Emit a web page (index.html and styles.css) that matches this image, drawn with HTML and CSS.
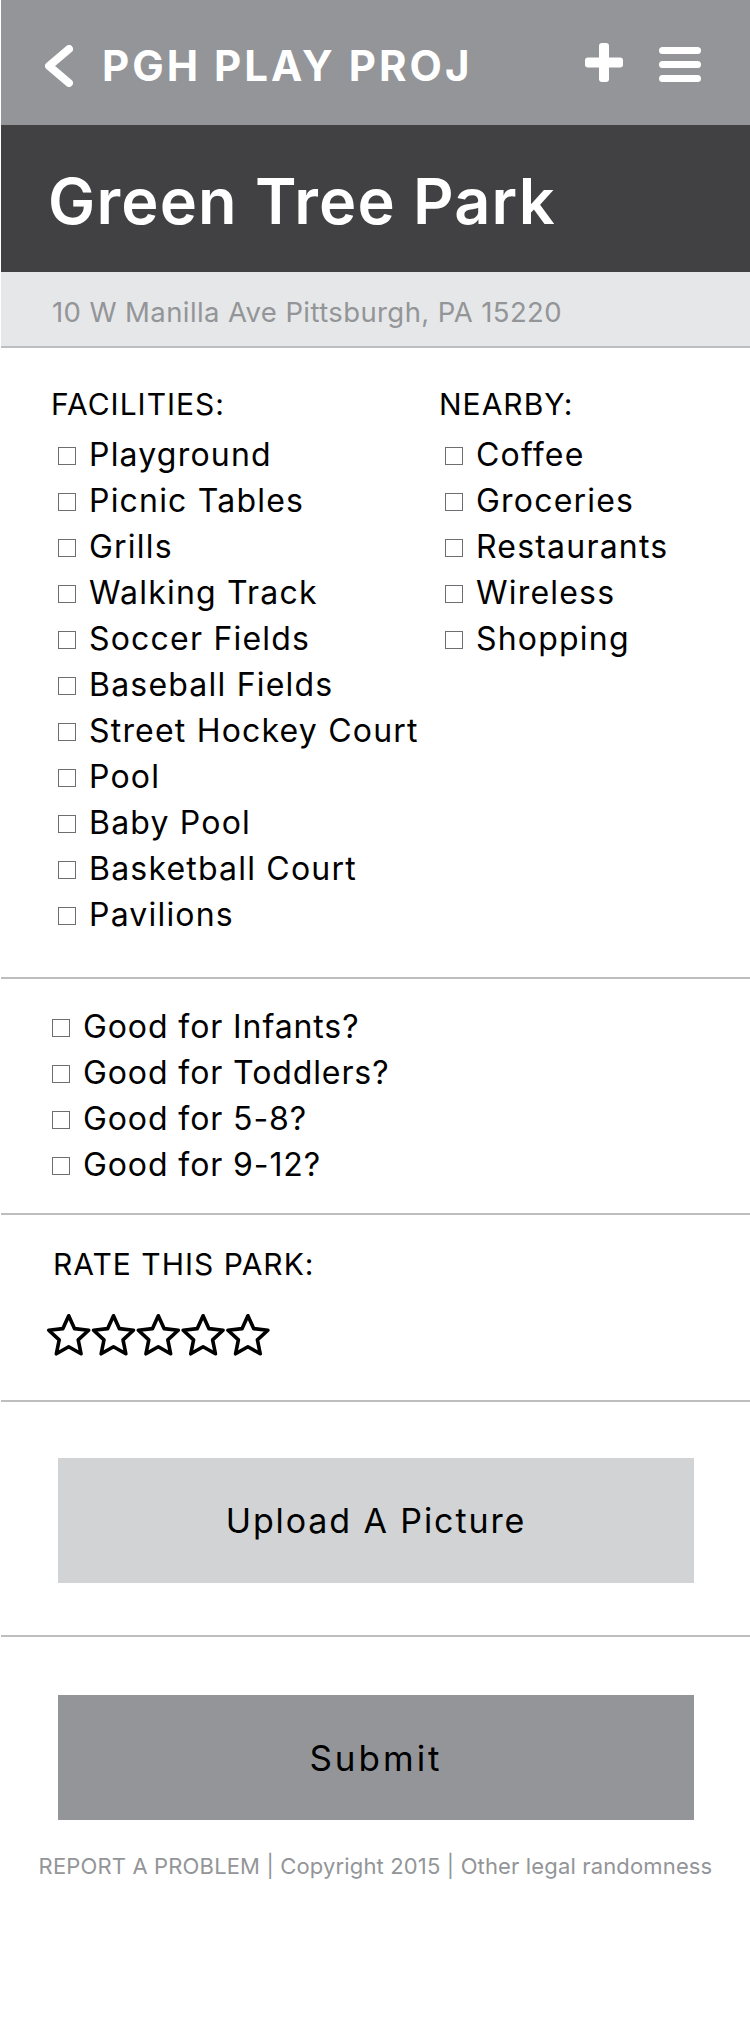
FILE: index.html
```html
<!DOCTYPE html>
<html lang="en">
<head>
<meta charset="utf-8">
<title>Green Tree Park</title>
<link rel="stylesheet" href="styles.css">
</head>
<body>
<div class="page">
  <header class="topbar">
    <svg class="icon-back" width="28" height="42" viewBox="0 0 28 42" aria-hidden="true">
      <polyline points="24,4 4,21 24,38" fill="none" stroke="#fff" stroke-width="8" stroke-linecap="round" stroke-linejoin="round"/>
    </svg>
    <span class="brand">PGH PLAY PROJ</span>
    <svg class="icon-plus" width="38" height="39" viewBox="0 0 38 39" aria-hidden="true">
      <rect x="0" y="14.5" width="38" height="10" rx="3" fill="#fff"/>
      <rect x="14" y="0" width="10" height="39" rx="3" fill="#fff"/>
    </svg>
    <svg class="icon-menu" width="42" height="35" viewBox="0 0 42 35" aria-hidden="true">
      <rect x="0" y="0" width="42" height="7" rx="3.5" fill="#fff"/>
      <rect x="0" y="14" width="42" height="7" rx="3.5" fill="#fff"/>
      <rect x="0" y="28" width="42" height="7" rx="3.5" fill="#fff"/>
    </svg>
  </header>

  <div class="park-name"><h1>Green Tree Park</h1></div>
  <div class="address">10 W Manilla Ave Pittsburgh, PA 15220</div>

  <section class="amenities">
    <div class="col col-facilities">
      <h2 class="label">FACILITIES:</h2>
      <ul class="checklist">
        <li><span class="cb"></span>Playground</li>
        <li><span class="cb"></span>Picnic Tables</li>
        <li><span class="cb"></span>Grills</li>
        <li><span class="cb"></span>Walking Track</li>
        <li><span class="cb"></span>Soccer Fields</li>
        <li><span class="cb"></span>Baseball Fields</li>
        <li><span class="cb"></span>Street Hockey Court</li>
        <li><span class="cb"></span>Pool</li>
        <li><span class="cb"></span>Baby Pool</li>
        <li><span class="cb"></span>Basketball Court</li>
        <li><span class="cb"></span>Pavilions</li>
      </ul>
    </div>
    <div class="col col-nearby">
      <h2 class="label">NEARBY:</h2>
      <ul class="checklist">
        <li><span class="cb"></span>Coffee</li>
        <li><span class="cb"></span>Groceries</li>
        <li><span class="cb"></span>Restaurants</li>
        <li><span class="cb"></span>Wireless</li>
        <li><span class="cb"></span>Shopping</li>
      </ul>
    </div>
  </section>

  <section class="ages">
    <ul class="checklist">
      <li><span class="cb"></span>Good for Infants?</li>
      <li><span class="cb"></span>Good for Toddlers?</li>
      <li><span class="cb"></span>Good for 5-8?</li>
      <li><span class="cb"></span>Good for 9-12?</li>
    </ul>
  </section>

  <section class="rating">
    <h2 class="label">RATE THIS PARK:</h2>
    <svg class="stars" width="226" height="46" viewBox="0 0 226 46" aria-label="0 of 5 stars">
      <defs>
        <polygon id="star" points="0,-21 5.88,-8.09 19.97,-6.49 9.51,3.09 12.34,16.99 0,10 -12.34,16.99 -9.51,3.09 -19.97,-6.49 -5.88,-8.09" fill="none" stroke="#000" stroke-width="3.6" stroke-linejoin="round"/>
      </defs>
      <use href="#star" x="22.7" y="24.75"/>
      <use href="#star" x="67.5" y="24.75"/>
      <use href="#star" x="112.3" y="24.75"/>
      <use href="#star" x="157.1" y="24.75"/>
      <use href="#star" x="201.9" y="24.75"/>
    </svg>
  </section>

  <section class="upload">
    <button class="btn btn-light" type="button">Upload A Picture</button>
  </section>

  <section class="submit">
    <button class="btn btn-dark" type="submit">Submit</button>
    <p class="footer">REPORT A PROBLEM | Copyright 2015 | Other legal randomness</p>
  </section>
</div>
</body>
</html>
```

FILE: styles.css
```css
html, body {
  margin: 0;
  padding: 0;
  background: #fff;
}

body {
  font-family: Inter, "Liberation Sans", sans-serif;
  color: #000;
}

.page {
  width: 749px;
  margin-left: 1px;
}

h1, h2, p, ul {
  margin: 0;
  padding: 0;
  font-weight: 400;
}

ul {
  list-style: none;
}

/* top bar */
.topbar {
  height: 125px;
  background: #939598;
  display: flex;
  align-items: center;
  padding: 0 49px 0 44px;
  box-sizing: border-box;
}

.icon-back {
  flex: none;
  margin-top: 7px;
}

.brand {
  color: #fff;
  font-weight: 700;
  font-size: 42px;
  letter-spacing: 3px;
  margin-left: 29px;
  margin-top: 6px;
}

.icon-plus {
  flex: none;
  margin-left: auto;
}

.icon-menu {
  flex: none;
  margin-left: 36px;
  margin-top: 4px;
}

/* park name band */
.park-name {
  background: #414042;
  height: 147px;
  box-sizing: border-box;
  padding: 45px 0 0 47px;
}

.park-name h1 {
  color: #fff;
  font-size: 63px;
  line-height: 63px;
  font-weight: 600;
  letter-spacing: 1.2px;
}

.address {
  background: #e6e7e8;
  color: #939598;
  font-size: 27.5px;
  line-height: 34px;
  letter-spacing: 0.4px;
  height: 76px;
  box-sizing: border-box;
  padding: 23px 0 0 51px;
  border-bottom: 2px solid #bcbec0;
}

/* shared */
.label {
  font-size: 30px;
  line-height: 36px;
  letter-spacing: 1px;
  margin-bottom: 9.5px;
}

.checklist li {
  display: flex;
  align-items: center;
  font-size: 32px;
  line-height: 46px;
  letter-spacing: 1.2px;
  white-space: nowrap;
}

.cb {
  flex: none;
  width: 18px;
  height: 18px;
  box-sizing: border-box;
  border: 1.5px solid #6d6e71;
  margin-right: 13px;
  margin-top: 2px;
}

section {
  border-bottom: 2px solid #bcbec0;
}

/* facilities / nearby */
.amenities {
  display: grid;
  grid-template-columns: 388px 1fr;
  padding: 38px 0 0 50px;
  height: 631px;
  box-sizing: border-box;
}

.amenities .checklist {
  padding-left: 7px;
}

.col-nearby .checklist {
  padding-left: 6px;
}

/* ages */
.ages {
  padding: 24.5px 0 0 51px;
  height: 236px;
  box-sizing: border-box;
}

.ages .checklist li {
  letter-spacing: 0.9px;
}

/* rating */
.rating {
  padding: 31px 0 0 52px;
  height: 187px;
  box-sizing: border-box;
}

.rating .label {
  margin-bottom: 0;
}

.stars {
  display: block;
  margin: 30px 0 0 -7px;
}

/* buttons */
.upload {
  padding: 56px 55px 0 57px;
  height: 235px;
  box-sizing: border-box;
}

.btn {
  display: block;
  width: 636px;
  height: 125px;
  border: 0;
  padding: 0;
  font-family: inherit;
  font-size: 34px;
  letter-spacing: 1.9px;
  color: #000;
  cursor: pointer;
}

.btn-light {
  background: #d1d3d4;
}

.btn-dark {
  background: #939598;
  font-size: 35px;
  letter-spacing: 3px;
}

.submit {
  padding: 58px 55px 0 57px;
  border-bottom: 0;
}

.footer {
  margin: 32px 0 0 -57px;
  width: 749px;
  text-align: center;
  font-size: 22px;
  line-height: 28px;
  letter-spacing: 0.15px;
  color: #939598;
}
```
